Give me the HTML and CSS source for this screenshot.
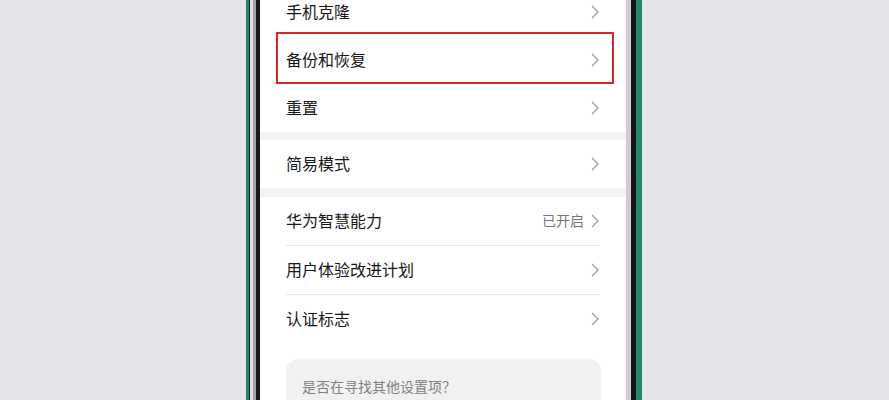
FILE: index.html
```html
<!DOCTYPE html>
<html lang="zh-CN">
<head>
<meta charset="utf-8">
<link rel="stylesheet" href="styles.css">
</head>
<body>
<div class="phone">
  <div class="b1"><div class="b2"><div class="b3"><div class="b4">
    <div class="screen">
      <div class="group first">
        <div class="row"><span class="label">手机克隆</span><span class="right"><svg class="chev" viewBox="0 0 8 14"><path d="M1 1 L7 7 L1 13"/></svg></span></div>
        <div class="row marked"><span class="label">备份和恢复</span><span class="right"><svg class="chev" viewBox="0 0 8 14"><path d="M1 1 L7 7 L1 13"/></svg></span><span class="redbox"></span></div>
        <div class="row"><span class="label">重置</span><span class="right"><svg class="chev" viewBox="0 0 8 14"><path d="M1 1 L7 7 L1 13"/></svg></span></div>
      </div>
      <div class="band"></div>
      <div class="group">
        <div class="row"><span class="label">简易模式</span><span class="right"><svg class="chev" viewBox="0 0 8 14"><path d="M1 1 L7 7 L1 13"/></svg></span></div>
      </div>
      <div class="band b9"></div>
      <div class="group">
        <div class="row line"><span class="label">华为智慧能力</span><span class="right"><span class="value">已开启</span><svg class="chev" viewBox="0 0 8 14"><path d="M1 1 L7 7 L1 13"/></svg></span></div>
        <div class="row line"><span class="label">用户体验改进计划</span><span class="right"><svg class="chev" viewBox="0 0 8 14"><path d="M1 1 L7 7 L1 13"/></svg></span></div>
        <div class="row"><span class="label">认证标志</span><span class="right"><svg class="chev" viewBox="0 0 8 14"><path d="M1 1 L7 7 L1 13"/></svg></span></div>
      </div>
      <div class="card"><span class="card-text">是否在寻找其他设置项？</span></div>
    </div>
  </div></div></div></div>
</div>
</body>
</html>
```
FILE: styles.css
```css
html, body {
  margin: 0;
  padding: 0;
  height: 400px;
  overflow: hidden;
  background: #e4e6ea;
  font-family: "Noto Sans CJK SC", "Noto Sans", sans-serif;
}
.phone {
  margin-left: 246px;
  width: 396px;
  height: 400px;
  box-sizing: border-box;
  border-left: 3px solid #24876b;
  border-right: 6px solid #24876b;
  display: flex;
}
.b1 { flex: 1; display: flex; border-left: 1px solid #1a1f1d; border-right: 5px solid #131615; }
.b2 { flex: 1; display: flex; border-left: 3px solid #dfe1e3; border-right: 1px solid #cfd2d4; }
.b3 { flex: 1; display: flex; border-left: 3px solid #a89fa8; border-right: 4px solid #d8c6d2; }
.b4 { flex: 1; display: flex; border-left: 4px solid #17191a; }
.screen {
  flex: 1;
  background: #ffffff;
  overflow: hidden;
  display: flex;
  flex-direction: column;
}
.screen > * { flex-shrink: 0; }
.group.first { margin-top: -12px; }
.row {
  position: relative;
  height: 48px;
  display: flex;
  align-items: center;
  justify-content: space-between;
  margin: 0 26px 0 26px;
  box-sizing: border-box;
}
.row.line { height: 49px; border-bottom: 1px solid #e6e6e6; }
.label {
  font-size: 16px;
  color: #161616;
  line-height: 20px;
  margin-bottom: 2px;
}
.right {
  display: flex;
  align-items: center;
  gap: 7px;
}
.value {
  font-size: 14px;
  color: #777777;
  line-height: 18px;
  margin-bottom: 2px;
}
.chev {
  width: 8px;
  height: 14px;
  fill: none;
  stroke: #9c9c9c;
  stroke-width: 1.3;
  margin-right: 1px;
}
.redbox {
  position: absolute;
  top: -4px;
  bottom: 0;
  left: -10px;
  right: -14px;
  border: 2px solid #d8262b;
  pointer-events: none;
}
.band {
  height: 8px;
  background: #f1f3f4;
}
.band.b9 { height: 9px; }
.card {
  margin: 16px 25px 0 26px;
  height: 80px;
  background: #f1f1f1;
  border-radius: 12px;
  padding: 14px 16px 0 16px;
  box-sizing: border-box;
}
.card-text {
  font-size: 14px;
  line-height: 20px;
  color: #808080;
}
```
